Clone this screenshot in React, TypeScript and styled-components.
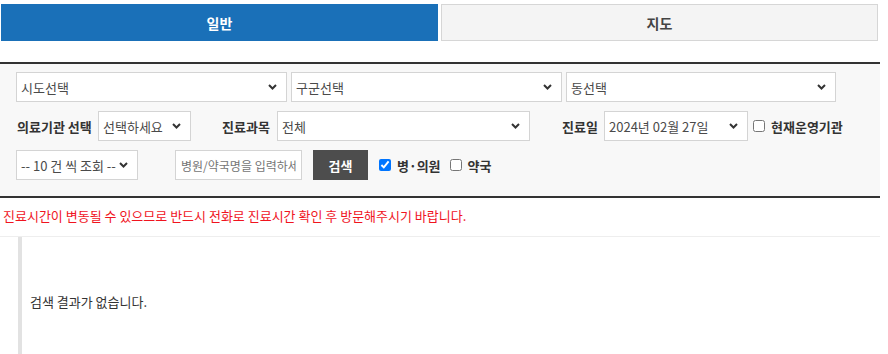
import React from 'react';
import styled, { createGlobalStyle } from 'styled-components';

const GlobalStyle = createGlobalStyle`
  body {
    margin: 0;
    background: #fff;
    font-family: "Noto Sans CJK KR", "Noto Sans", sans-serif;
    color: #333;
  }
`;

const Page = styled.div`
  width: 880px;
`;

const TabBar = styled.div`
  display: flex;
  gap: 3px;
  padding: 4px 0 0 1px;
  width: 877px;
`;

const Tab = styled.div<{ $active?: boolean }>`
  flex: 1;
  height: 37px;
  display: flex;
  align-items: center;
  justify-content: center;
  box-sizing: border-box;
  font-size: 14px;
  font-weight: bold;
  background: ${props => (props.$active ? '#1a70b8' : '#f4f4f4')};
  color: ${props => (props.$active ? '#fff' : '#444')};
  border: 1px solid ${props => (props.$active ? '#1a70b8' : '#d6d6d6')};
`;

const SearchBox = styled.div`
  margin-top: 21px;
  border-top: 2px solid #333;
  border-bottom: 2px solid #333;
  background: #f8f8f8;
  padding: 8px 0 16px 16px;
  display: flex;
  flex-direction: column;
  gap: 9px;
`;

const Row = styled.div`
  display: flex;
  align-items: center;
  height: 30px;
`;

const SelectWrap = styled.div<{ $w: number; $ml?: number }>`
  position: relative;
  width: ${props => props.$w}px;
  height: 30px;
  margin-left: ${props => props.$ml || 0}px;
  flex-shrink: 0;
`;

const Select = styled.select`
  appearance: none;
  width: 100%;
  height: 100%;
  box-sizing: border-box;
  border: 1px solid #d4d4d4;
  background: #fff;
  padding: 0 20px 0 4px;
  font-family: inherit;
  font-size: 13px;
  color: #4a4a4a;
  outline: none;
`;

const Chevron = styled.svg`
  position: absolute;
  right: 10px;
  top: 12px;
  pointer-events: none;
`;

const Label = styled.span<{ $ml?: number; $w: number }>`
  width: ${props => props.$w}px;
  flex-shrink: 0;
  font-size: 13px;
  font-weight: bold;
  color: #333;
  margin-left: ${props => props.$ml || 0}px;
  white-space: nowrap;
`;

const Check = styled.label<{ $ml?: number }>`
  display: flex;
  align-items: center;
  gap: 6px;
  margin-left: ${props => props.$ml || 0}px;
  font-size: 13px;
  font-weight: bold;
  color: #333;
  white-space: nowrap;

  input {
    margin: 0;
    width: 12px;
    height: 12px;
  }
`;

const Input = styled.input`
  width: 127px;
  height: 30px;
  box-sizing: border-box;
  margin-left: 37px;
  border: 1px solid #d4d4d4;
  padding: 0 5px;
  font-family: inherit;
  font-size: 12px;
  outline: none;

  ::placeholder {
    color: #777;
  }
`;

const Button = styled.button`
  width: 55px;
  height: 30px;
  margin-left: 11px;
  border: none;
  background: #4d4d4d;
  color: #fff;
  font-family: inherit;
  font-size: 13px;
  font-weight: bold;
`;

const Notice = styled.p`
  margin: 0;
  padding: 8px 3px 11px;
  line-height: 19px;
  font-size: 13px;
  color: #f0141e;
  border-bottom: 1px solid #eee;
`;

const ResultArea = styled.div`
  margin-left: 18px;
  height: 117px;
  border-left: 4px solid #e2e2e2;
  display: flex;
  align-items: center;
  padding: 12px 0 0 8px;
  box-sizing: border-box;
  font-size: 13px;
  color: #333;
`;

const Dropdown = ({ w, ml, text }: { w: number; ml?: number; text: string }) => (
  <SelectWrap $w={w} $ml={ml}>
    <Select defaultValue={text}>
      <option>{text}</option>
    </Select>
    <Chevron width="9" height="6" viewBox="0 0 9 6">
      <polyline points="1,1 4.5,4.5 8,1" fill="none" stroke="#333" strokeWidth="2" />
    </Chevron>
  </SelectWrap>
);

export default function App() {
  return (
    <Page>
      <GlobalStyle />
      <TabBar>
        <Tab $active>일반</Tab>
        <Tab>지도</Tab>
      </TabBar>
      <SearchBox>
        <Row>
          <Dropdown w={271} text="시도선택" />
          <Dropdown w={271} ml={4} text="구군선택" />
          <Dropdown w={270} ml={4} text="동선택" />
        </Row>
        <Row>
          <Label $ml={1} $w={81}>의료기관 선택</Label>
          <Dropdown w={93} text="선택하세요" />
          <Label $ml={31} $w={55}>진료과목</Label>
          <Dropdown w={253} text="전체" />
          <Label $ml={32} $w={42}>진료일</Label>
          <Dropdown w={144} text="2024년 02월 27일" />
          <Check $ml={5}>
            <input type="checkbox" />
            현재운영기관
          </Check>
        </Row>
        <Row>
          <Dropdown w={122} text="-- 10 건 씩 조회 --" />
          <Input placeholder="병원/약국명을 입력하세요" />
          <Button>검색</Button>
          <Check $ml={11}>
            <input type="checkbox" defaultChecked />
            병·의원
          </Check>
          <Check $ml={9}>
            <input type="checkbox" />
            약국
          </Check>
        </Row>
      </SearchBox>
      <Notice>진료시간이 변동될 수 있으므로 반드시 전화로 진료시간 확인 후 방문해주시기 바랍니다.</Notice>
      <ResultArea>검색 결과가 없습니다.</ResultArea>
    </Page>
  );
}
